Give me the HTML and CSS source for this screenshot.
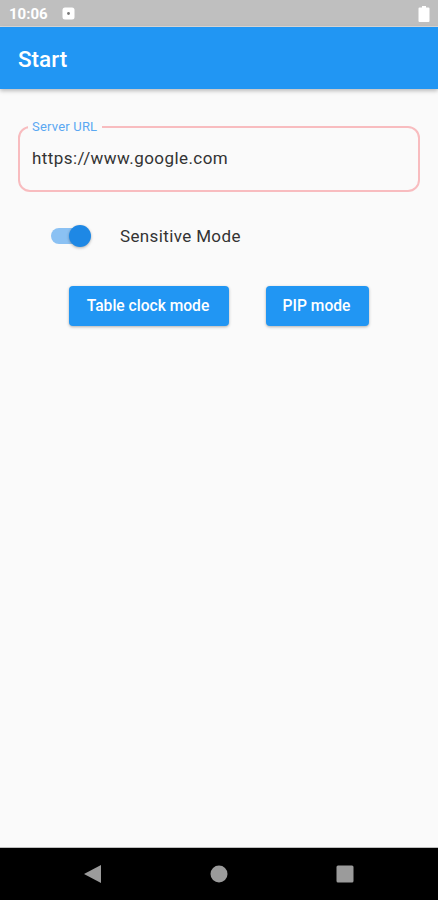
FILE: index.html
```html
<!DOCTYPE html>
<html lang="en">
<head>
<meta charset="utf-8">
<title>Start</title>
<link rel="stylesheet" href="styles.css">
</head>
<body>
<div class="screen">
  <div class="status">
    <span class="time">10:06</span>
    <svg class="notif" width="13" height="13" viewBox="0 0 13 13"><rect x="0.5" y="0.5" width="12" height="12" rx="2.5" fill="#fff"/><circle cx="6.5" cy="6.5" r="1.4" fill="#777"/></svg>
    <svg class="battery" width="12" height="16" viewBox="0 0 12 16"><path d="M4 0h4v1.5h2.500a1 1 0 0 1 1 1V15a1 1 0 0 1-1 1h-9a1 1 0 0 1-1-1V2.500a1 1 0 0 1 1-1H4z" fill="#fff"/></svg>
  </div>
  <header class="appbar">Start</header>
  <main class="content">
    <fieldset class="field">
      <legend class="field-label">Server URL</legend>
      <div class="field-value">https://www.google.com</div>
    </fieldset>
    <div class="switch-row">
      <div class="switch"><span class="track"></span><span class="thumb"></span></div>
      <span class="switch-label">Sensitive Mode</span>
    </div>
    <div class="actions">
      <button class="btn btn-table">Table clock mode</button>
      <button class="btn btn-pip">PIP mode</button>
    </div>
  </main>
  <nav class="navbar">
    <svg width="18" height="18" viewBox="0 0 18 18"><path d="M17 0v18L0 9z" fill="#9b9b9b"/></svg>
    <svg width="18" height="18" viewBox="0 0 18 18"><circle cx="9" cy="9" r="8.500" fill="#9b9b9b"/></svg>
    <svg width="18" height="18" viewBox="0 0 18 18"><rect x="0.500" y="0.500" width="17" height="17" rx="1.500" fill="#9b9b9b"/></svg>
  </nav>
</div>
</body>
</html>
```
FILE: styles.css
```css
* { box-sizing: border-box; }
html, body { margin: 0; padding: 0; }
body { font-family: Roboto, "Liberation Sans", sans-serif; background: #fafafa; }
.screen { width: 438px; height: 900px; display: flex; flex-direction: column; overflow: hidden; }

.status { height: 27px; flex: none; background: #bfbfbf; border-bottom: 1px solid #d8d8d8; display: flex; align-items: center; padding: 1px 8px 0 9px; color: #fff; }
.time { font-size: 15px; font-weight: 700; width: 53px; }
.battery { margin-left: auto; }

.appbar { height: 62px; flex: none; background: #2196f3; color: #fff; font-size: 22.5px; font-weight: 500; display: flex; align-items: center; padding: 2px 18px 0; box-shadow: 0 2px 4px rgba(0,0,0,.25); position: relative; }

.content { flex: 1; padding: 31px 18px 0; display: flex; flex-direction: column; }

.field { margin: 0; padding: 0 12px; height: 72px; border: 2px solid #f8bcbf; border-radius: 12px; }
.field-label { font-size: 13px; color: #5aa8f2; padding: 0 5px 0 4px; margin-left: -4px; line-height: 14px; letter-spacing: .2px; }
.field-value { font-size: 17px; color: #333; letter-spacing: .44px; line-height: 20px; margin-top: 14px; }

.switch-row { display: flex; align-items: center; margin-top: 29px; padding-left: 33px; height: 30px; }
.switch { position: relative; width: 40px; height: 24px; flex: none; }
.track { position: absolute; left: 0; top: 4px; width: 36px; height: 16px; border-radius: 8px; background: #8bc1f3; }
.thumb { position: absolute; right: 0; top: 1px; width: 22px; height: 22px; border-radius: 50%; background: #1e88e5; box-shadow: 0 1px 3px rgba(0,0,0,.3); }
.switch-label { margin-left: 29px; font-size: 17px; color: #333; letter-spacing: .37px; }

.actions { display: flex; margin-top: 35px; padding-left: 51px; gap: 37px; }
.btn { height: 40px; border: 0; border-radius: 4px; background: #2196f3; color: #fff; font-family: inherit; font-size: 15.6px; font-weight: 500; box-shadow: 0 1px 3px rgba(0,0,0,.3); padding: 0 2px 0 0; }
.btn-table { width: 160px; }
.btn-pip { width: 103px; }

.navbar { height: 53px; flex: none; background: #000; border-top: 1px solid #bdbdbd; display: grid; grid-template-columns: 18px 18px 18px; justify-content: start; column-gap: 108px; align-items: center; padding: 0 0 0 84px; }
```
